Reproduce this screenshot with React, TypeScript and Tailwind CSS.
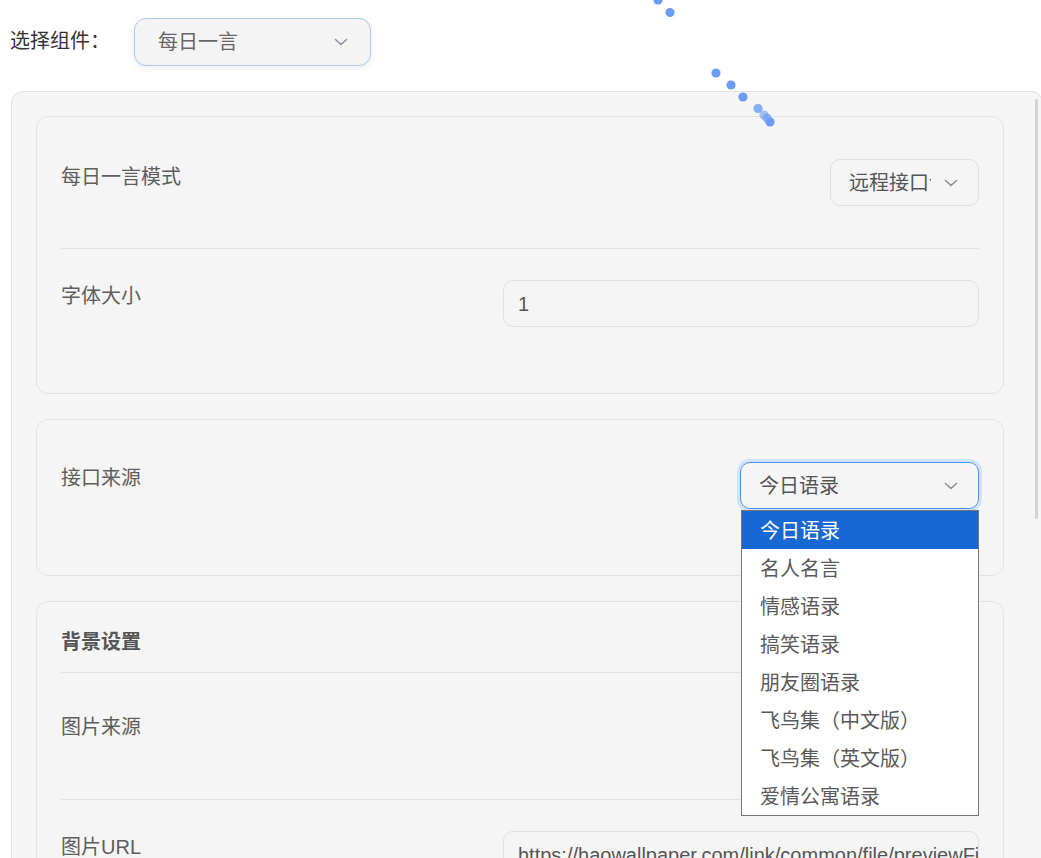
import { ReactNode } from 'react'

const font = "font-['Liberation_Sans','Noto_Sans_CJK_SC',sans-serif]"

const Chevron = ({ className = '' }: { className?: string }) => (
  <svg width="14" height="8" viewBox="0 0 14 8" className={className}>
    <polyline points="1.5,1.5 7,6.5 12.5,1.5" fill="none" stroke="#8b909a" strokeWidth="1.6" strokeLinecap="round" strokeLinejoin="round" />
  </svg>
)

const options = ['今日语录', '名人名言', '情感语录', '搞笑语录', '朋友圈语录', '飞鸟集（中文版）', '飞鸟集（英文版）', '爱情公寓语录']

const dots: [number, number, number][] = [
  [658, 0, 1],
  [670, 12.5, 1],
  [716, 73, 1],
  [731, 85, 1],
  [743, 97, 1],
  [758, 108.5, 0.8],
  [764, 115, 0.6],
  [767, 118, 0.7],
  [770, 122, 1],
]

interface RowProps {
  label: ReactNode
  labelOffset?: string
  children?: ReactNode
  last?: boolean
}

const Row = ({ label, labelOffset = 'mt-[3px]', children, last }: RowProps) => (
  <div className={`flex items-start justify-between pt-[31px] pb-[42px] ${last ? '' : 'border-b border-[#e2e2e2]'}`}>
    <div className={`text-[20px] leading-[28px] text-[#5e5e5e] ${labelOffset}`}>{label}</div>
    {children}
  </div>
)

const Card = ({ children }: { children: ReactNode }) => (
  <div className="w-[968px] rounded-[12px] border border-[#e3e3e3] bg-[#f5f5f5] px-6 pt-[11px] pb-6">{children}</div>
)

export default function App() {
  return (
    <div className={`relative h-[858px] overflow-hidden bg-white ${font}`}>
      <div className="flex items-center pt-[18px]">
        <div className="ml-[10px] w-[124px] text-[20px] leading-[28px] text-[#333] pb-[3px]">选择组件：</div>
        <div className="flex h-[48px] w-[237px] items-center justify-between rounded-[12px] border border-[#adc8f3] bg-[#f4f4f5] pl-[23px] pr-[22px] shadow-[0_2px_6px_rgba(0,0,0,0.08)]">
          <span className="text-[20px] text-[#666]">每日一言</span>
          <Chevron />
        </div>
      </div>

      <div className="relative mt-[25px] ml-[11px] h-[800px] w-[1032px] rounded-[12px] border border-[#e0e0e0] bg-[#f5f5f5] pl-6 pt-6">
        <div className="absolute right-[4px] top-[7px] h-[420px] w-[3px] rounded-full bg-[#d4d4d4]" />
        <div className="flex flex-col gap-[25px]">
          <Card>
            <Row label="每日一言模式" labelOffset="mt-[4px]">
              <div className="flex h-[47px] w-[149px] items-center rounded-[10px] border border-[#e0e0e0] pl-[18px] pr-[20px]">
                <div className="w-[82px] overflow-hidden whitespace-nowrap text-[20px] text-[#555]">远程接口调用</div>
                <Chevron className="ml-auto" />
              </div>
            </Row>
            <Row label="字体大小" labelOffset="mt-[2px]" last>
              <div className="flex h-[47px] w-[476px] items-center rounded-[10px] border border-[#e0e0e0] px-[14px] text-[20px] text-[#555]">1</div>
            </Row>
          </Card>

          <Card>
            <Row label="接口来源" labelOffset="mt-[2px]" last>
              <div className="relative">
                <div className="flex h-[47px] w-[239px] items-center justify-between rounded-[10px] border border-[#4f8ef7] pl-[18px] pr-[20px] ring-[3px] ring-[#d3e2fb]">
                  <span className="text-[20px] text-[#555]">今日语录</span>
                  <Chevron />
                </div>
                <div className="absolute left-[1px] top-[48px] z-10 w-[238px] border border-[#767676] bg-white">
                  {options.map((o, i) => (
                    <div
                      key={o}
                      className={`flex h-[38px] items-center pl-[18px] pt-[2px] text-[20px] ${i === 0 ? 'bg-[#1967d2] text-white' : 'text-[#5a5a5a]'}`}
                    >
                      {o}
                    </div>
                  ))}
                </div>
              </div>
            </Row>
          </Card>

          <Card>
            <div className="border-b border-[#e2e2e2] pt-[15px] pb-[16px] text-[20px] font-bold leading-[28px] text-[#555]">背景设置</div>
            <Row label="图片来源" labelOffset="mt-[9px]">
              <div className="h-[53px] w-[238px]" />
            </Row>
            <Row label="图片URL" labelOffset="mt-[2px]" last>
              <div className="flex h-[47px] w-[476px] items-center overflow-hidden whitespace-nowrap rounded-[10px] border border-[#e0e0e0] px-[14px] text-[20px] text-[#555]">
                https://haowallpaper.com/link/common/file/previewFileImg/
              </div>
            </Row>
          </Card>
        </div>
      </div>

      <svg className="pointer-events-none absolute left-0 top-0" width="1041" height="858">
        {dots.map(([x, y, o], i) => (
          <circle key={i} cx={x} cy={y} r="4.6" fill="#6b9cf4" opacity={o} />
        ))}
      </svg>
    </div>
  )
}
